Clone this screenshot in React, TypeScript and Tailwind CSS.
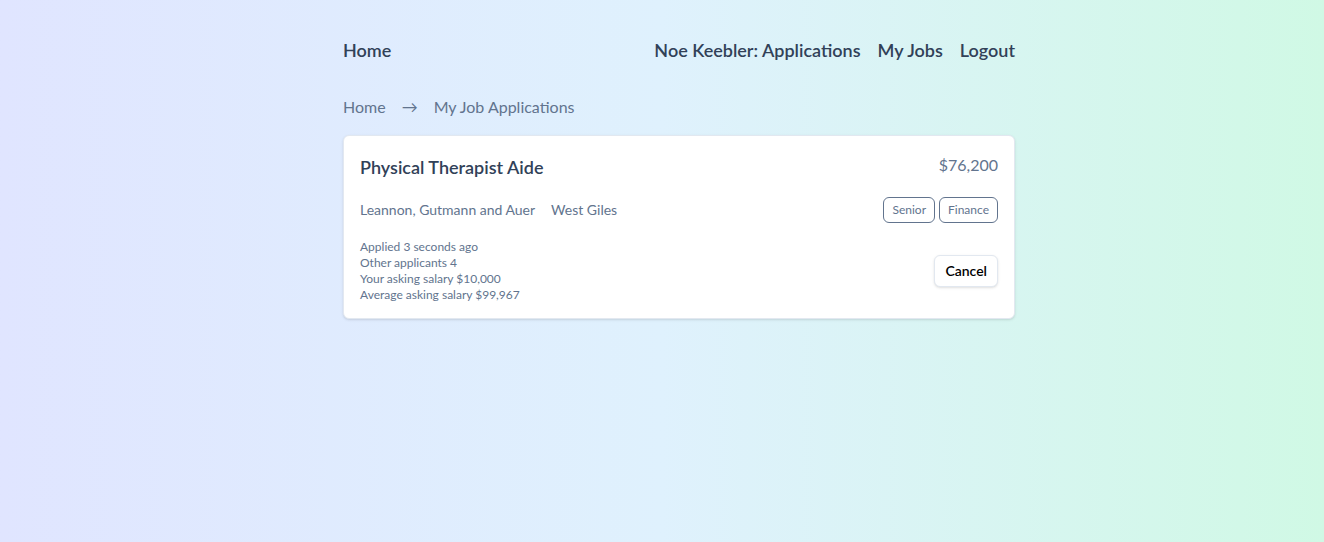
import React from 'react';

const tags = ['Senior', 'Finance'];

const App: React.FC = () => {
  return (
    <div
      className="min-h-screen w-full bg-linear-to-r from-[#e0e5ff] via-[#dff1fd] to-[#d0f9e5] text-slate-700"
      style={{ fontFamily: 'Lato, "Noto Sans", sans-serif' }}
    >
      <div className="mx-auto max-w-[706px] pl-[34px]">
        {/* Top nav */}
        <nav className="flex items-center justify-between pt-[36px] text-lg font-semibold text-slate-700">
          <a href="#">Home</a>
          <div className="flex items-center gap-[17px]">
            <a href="#">Noe Keebler: Applications</a>
            <a href="#">My Jobs</a>
            <a href="#">Logout</a>
          </div>
        </nav>

        {/* Breadcrumb */}
        <div className="mt-[31px] flex items-center gap-4 text-base text-slate-500">
          <span>Home</span>
          <span>→</span>
          <span>My Job Applications</span>
        </div>

        {/* Application card */}
        <div className="mt-[16px] rounded-md border border-slate-200 bg-white px-4 pt-4 pb-[15px] shadow-sm">
          <div className="flex items-start justify-between">
            <h2 className="mt-[1px] text-lg font-semibold text-slate-700">Physical Therapist Aide</h2>
            <span className="mt-[1px] text-base text-slate-500">$76,200</span>
          </div>

          <div className="mt-[16px] flex items-center justify-between">
            <div className="flex gap-4 text-sm text-slate-500">
              <span>Leannon, Gutmann and Auer</span>
              <span>West Giles</span>
            </div>
            <div className="flex gap-1">
              {tags.map((t) => (
                <span
                  key={t}
                  className="rounded-md border border-slate-500 px-2 py-[4px] text-xs text-slate-500"
                >
                  {t}
                </span>
              ))}
            </div>
          </div>

          <div className="mt-[16px] flex items-center justify-between">
            <div className="text-xs leading-4 text-slate-500">
              <div>Applied 3 seconds ago</div>
              <div>Other applicants 4</div>
              <div>Your asking salary $10,000</div>
              <div>Average asking salary $99,967</div>
            </div>
            <button className="h-8 rounded-md border border-slate-200 bg-white px-[10px] text-sm font-semibold text-black shadow-sm">
              Cancel
            </button>
          </div>
        </div>
      </div>
    </div>
  );
};

export default App;
